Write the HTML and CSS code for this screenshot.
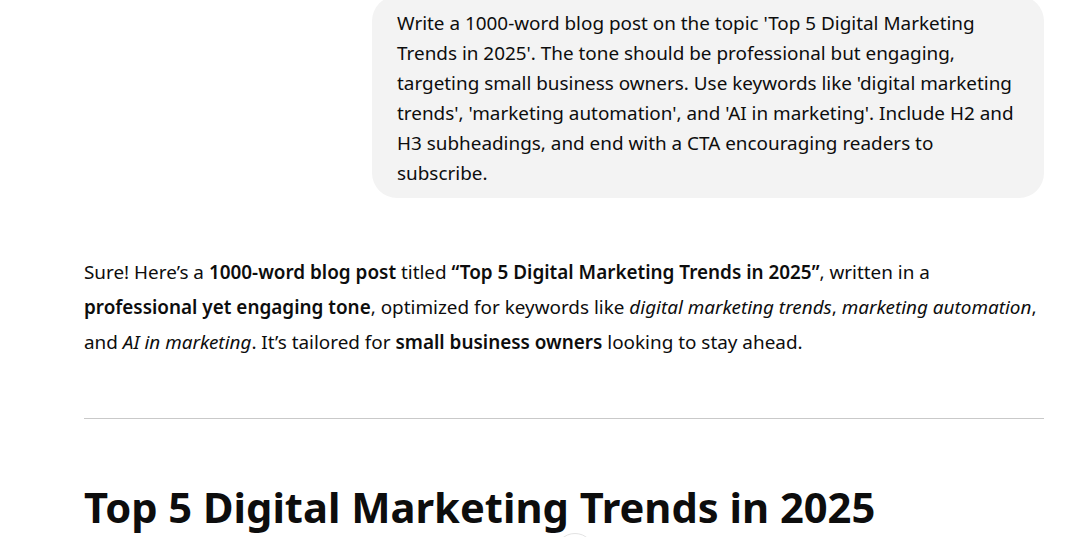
FILE: index.html
```html
<!DOCTYPE html>
<html lang="en">
<head>
<meta charset="utf-8">
<title>Chat</title>
<link rel="stylesheet" href="styles.css">
</head>
<body>
<main class="thread">
  <div class="user-row">
    <div class="bubble">Write a 1000-word blog post on the topic 'Top 5 Digital Marketing Trends in 2025'. The tone should be professional but engaging, targeting small business owners. Use keywords like 'digital marketing trends', 'marketing automation', and 'AI in marketing'. Include H2 and H3 subheadings, and end with a CTA encouraging readers to subscribe.</div>
  </div>
  <article class="answer">
    <p class="intro">Sure! Here’s a <strong>1000-word blog post</strong> titled <strong>“Top 5 Digital Marketing Trends in 2025”</strong>, written in a <strong>professional yet engaging tone</strong>, optimized for keywords like <em>digital marketing trends</em>, <em>marketing automation</em>, and <em>AI in marketing</em>. It’s tailored for <strong>small business owners</strong> looking to stay ahead.</p>
    <hr class="divider">
    <h1 class="title">Top 5 Digital Marketing Trends in 2025</h1>
  </article>
</main>
<button class="scroll-btn" aria-label="Scroll to bottom">
  <svg width="18" height="18" viewBox="0 0 24 24" fill="none" stroke="#0d0d0d" stroke-width="2" stroke-linecap="round" stroke-linejoin="round"><path d="M12 5v14M6 13l6 6 6-6"/></svg>
</button>
</body>
</html>
```
FILE: styles.css
```css
html, body {
  margin: 0;
  padding: 0;
  background: #ffffff;
  overflow: hidden;
}
body {
  font-family: "Noto Sans", "Open Sans", sans-serif;
  color: #0d0d0d;
  position: relative;
  height: 537px;
}
.thread {
  width: 960px;
  margin: -4px 0 0 84px;
  display: flex;
  flex-direction: column;
}
.user-row {
  display: flex;
  justify-content: flex-end;
}
.bubble {
  max-width: 622px;
  padding: 12px 25px 10px 25px;
  background: #f3f3f3;
  border-radius: 25px;
  font-size: 18.9px;
  line-height: 30px;
}
.answer {
  padding-top: 57px;
}
.intro {
  margin: 0;
  font-size: 18.9px;
  line-height: 35px;
}
.intro strong { font-weight: 600; }
.intro em { font-style: italic; }
.divider {
  margin: 58px 0 0 0;
  border: 0;
  border-top: 1px solid #c9c9c9;
  height: 0;
}
.title {
  margin: 63px 0 0 0;
  font-size: 41.7px;
  line-height: 50px;
  font-weight: 700;
}
.scroll-btn {
  position: absolute;
  left: 555px;
  top: 533px;
  width: 40px;
  height: 40px;
  border-radius: 50%;
  border: 1px solid #e3e3e3;
  background: #ffffff;
  display: flex;
  align-items: flex-start;
  justify-content: center;
  padding: 10px 0 0 0;
}
```
